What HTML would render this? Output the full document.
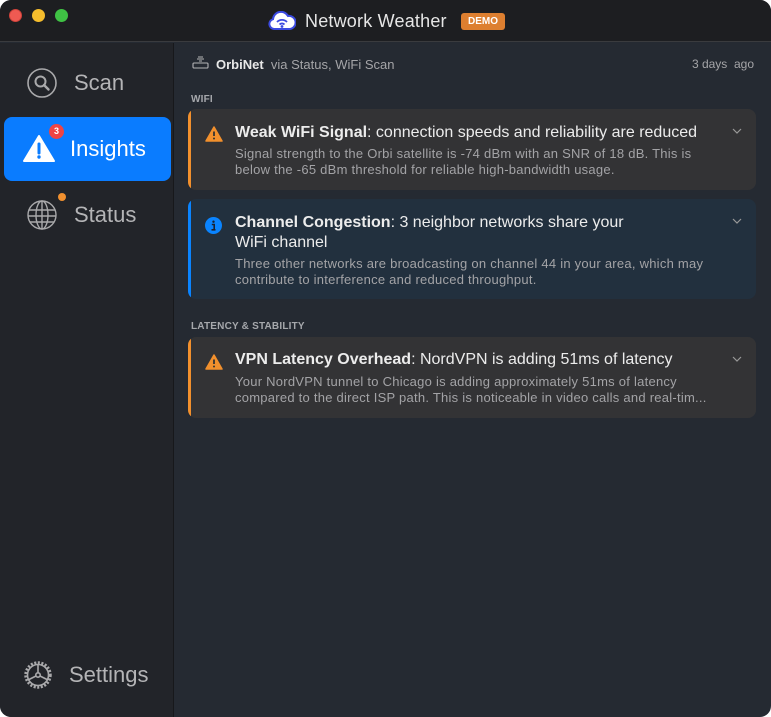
<!DOCTYPE html>
<html><head><meta charset="utf-8"><style>
*{margin:0;padding:0;box-sizing:border-box}
body{width:771px;height:717px;background:#fff;font-family:"Liberation Sans",sans-serif;overflow:hidden;position:relative}
.win{position:absolute;inset:0;border-radius:11px;overflow:hidden;background:#252a32}
.tb{position:absolute;left:0;top:0;width:771px;height:42px;background:#1d1e21;border-bottom:1px solid #3a3b3e}
.dot{position:absolute;top:9px;width:13px;height:13px;border-radius:50%}
.side{position:absolute;left:0;top:43px;width:174px;bottom:0;background:#222429;border-right:1px solid #17181b}
.item{position:absolute;left:4px;width:167px;height:64px;border-radius:8px;color:#b4b4b6;font-size:22px}
.item span{position:absolute;left:70px;top:19px}
.item svg{position:absolute}
.main{position:absolute;left:175px;top:43px;right:0;bottom:0}
.card{position:absolute;left:13px;width:568px;border-radius:8px;overflow:hidden}
.card .bar{position:absolute;left:0;top:0;bottom:0;width:3px}
.card h3{position:absolute;left:47px;font-size:16px;font-weight:bold;color:#ececec;line-height:20px;white-space:nowrap}
.card h3 i{font-style:normal;font-weight:normal;}
.card p{position:absolute;left:47px;font-size:13px;color:#a3a3a6;line-height:15.5px;white-space:nowrap;letter-spacing:.25px}
.card svg{position:absolute}
.chev{position:absolute;right:14px}
.sec{position:absolute;left:16px;font-size:10px;font-weight:bold;color:#a6a8ac;letter-spacing:.2px}
</style></head><body><div class="win">
<div class="tb">
<div class="dot" style="left:9px;background:#ee5a52;border:1px solid #d0433b"></div>
<div class="dot" style="left:32px;background:#f5bd2d"></div>
<div class="dot" style="left:55px;background:#3fc244"></div>
<svg style="position:absolute;left:268px;top:11px" width="28" height="20" viewBox="0 0 28 20"><path d="M6 18a5 5 0 0 1-1-9.8A8 8 0 0 1 20 5a6 6 0 0 1 2 13z" fill="#fff" stroke="#3b4ae0" stroke-width="2"/><path d="M9 11a7 7 0 0 1 10 0M11.5 13.5a3.5 3.5 0 0 1 5 0" stroke="#3b4ae0" stroke-width="1.8" fill="none"/><circle cx="14" cy="15.5" r="1.4" fill="#3b4ae0"/></svg>
<div style="position:absolute;left:305px;top:11px;font-size:18px;color:#e6e6e6;letter-spacing:.2px">Network Weather</div>
<div style="position:absolute;left:461px;top:13px;width:44px;height:17px;border-radius:3px;background:#dd7f30;color:#fff;font-size:10px;font-weight:bold;text-align:center;line-height:17px">DEMO</div>
</div>
<div class="side">
<div class="item" style="top:8px"><svg style="left:22px;top:16px" width="32" height="32" viewBox="0 0 32 32"><circle cx="16" cy="16" r="14" fill="none" stroke="#a9a9ab" stroke-width="1.6"/><circle cx="14.5" cy="14.5" r="5" fill="none" stroke="#a9a9ab" stroke-width="2"/><path d="M18 18l4.5 4.5" stroke="#a9a9ab" stroke-width="2.4" stroke-linecap="round"/></svg><span>Scan</span></div>
<div class="item" style="top:74px;background:#0a7cff;color:#fff"><svg style="left:18px;top:16px" width="34" height="30" viewBox="0 0 34 30"><path d="M17 3L32 28H2z" fill="#fff" stroke="#fff" stroke-width="2" stroke-linejoin="round"/><path d="M17 11v9" stroke="#0a7cff" stroke-width="3" stroke-linecap="round"/><circle cx="17" cy="24" r="1.7" fill="#0a7cff"/></svg>
<div style="position:absolute;left:45px;top:7px;width:15px;height:15px;border-radius:50%;background:#ee4444;color:#fff;font-size:9px;font-weight:bold;text-align:center;line-height:15px">3</div><span style="left:66px">Insights</span></div>
<div class="item" style="top:140px"><svg style="left:22px;top:16px" width="32" height="32" viewBox="0 0 32 32" fill="none" stroke="#a9a9ab" stroke-width="1.4"><circle cx="16" cy="16" r="14"/><ellipse cx="16" cy="16" rx="6" ry="14"/><path d="M3 11h26M2 17h28M4 23h24M16 2v28"/></svg><div style="position:absolute;left:54px;top:10px;width:8px;height:8px;border-radius:50%;background:#f0902f"></div><span>Status</span></div>
<div class="item" style="top:600px"><svg style="left:18px;top:16px" width="32" height="32" viewBox="0 0 32 32" fill="none" stroke="#a9a9ab" stroke-width="1.6"><circle cx="16" cy="16" r="12" stroke-dasharray="2 1.5" stroke-width="3.5"/><circle cx="16" cy="16" r="10.5"/><circle cx="16" cy="16" r="2.2"/><path d="M16 14V5.5M14 17l-8 4M18 17l8 4"/></svg><span style="left:65px">Settings</span></div>
</div>
<div class="main">
<svg style="position:absolute;left:17px;top:13px" width="17" height="13" viewBox="0 0 17 13" fill="none" stroke="#b5b5b7" stroke-width="1.1"><rect x="1" y="7" width="15" height="5" rx="1"/><path d="M6 1h5M5 3h7M7 5h3"/></svg>
<div style="position:absolute;left:41px;top:14px;font-size:13px;color:#e8e8e8"><b>OrbiNet</b> <span style="color:#a5a5a8">&nbsp;via Status, WiFi Scan</span></div>
<div style="position:absolute;right:17px;top:14px;font-size:12px;color:#a5a5a8">3 days &nbsp;ago</div>
<div class="sec" style="top:51px">WIFI</div>
<div class="card" style="top:66px;height:81px;background:#333335"><div class="bar" style="background:#f2902d"></div>
<svg style="left:17px;top:17px" width="18" height="16" viewBox="0 0 18 16"><path d="M9 1L17 15H1z" fill="#f2902d" stroke="#f2902d" stroke-width="1.5" stroke-linejoin="round"/><path d="M9 5.5v4.5" stroke="#333" stroke-width="1.8"/><circle cx="9" cy="12.5" r="1" fill="#333"/></svg>
<h3 style="top:14px">Weak WiFi Signal<i>: connection speeds and reliability are reduced</i></h3>
<p style="top:37px">Signal strength to the Orbi satellite is -74 dBm with an SNR of 18 dB. This is<br>below the -65 dBm threshold for reliable high-bandwidth usage.</p>
<svg class="chev" style="top:19px" width="10" height="6" viewBox="0 0 10 6"><path d="M1 1l4 4 4-4" stroke="#999" stroke-width="1.2" fill="none"/></svg></div>
<div class="card" style="top:156px;height:100px;background:#22303e"><div class="bar" style="background:#0a84ff"></div>
<svg style="left:17px;top:18px" width="17" height="17" viewBox="0 0 17 17"><circle cx="8.5" cy="8.5" r="8.5" fill="#0a84ff"/><circle cx="8.5" cy="4.7" r="1.2" fill="#1a2230"/><path d="M6.8 7.5h2.4v5M6.5 12.8h4" stroke="#1a2230" stroke-width="1.6" fill="none"/></svg>
<h3 style="top:14px">Channel Congestion<i>: 3 neighbor networks share your<br>WiFi channel</i></h3>
<p style="top:57px">Three other networks are broadcasting on channel 44 in your area, which may<br>contribute to interference and reduced throughput.</p>
<svg class="chev" style="top:19px" width="10" height="6" viewBox="0 0 10 6"><path d="M1 1l4 4 4-4" stroke="#999" stroke-width="1.2" fill="none"/></svg></div>
<div class="sec" style="top:278px">LATENCY &amp; STABILITY</div>
<div class="card" style="top:294px;height:81px;background:#333335"><div class="bar" style="background:#f2902d"></div>
<svg style="left:17px;top:17px" width="18" height="16" viewBox="0 0 18 16"><path d="M9 1L17 15H1z" fill="#f2902d" stroke="#f2902d" stroke-width="1.5" stroke-linejoin="round"/><path d="M9 5.5v4.5" stroke="#333" stroke-width="1.8"/><circle cx="9" cy="12.5" r="1" fill="#333"/></svg>
<h3 style="top:13px">VPN Latency Overhead<i>: NordVPN is adding 51ms of latency</i></h3>
<p style="top:37px">Your NordVPN tunnel to Chicago is adding approximately 51ms of latency<br>compared to the direct ISP path. This is noticeable in video calls and real-tim...</p>
<svg class="chev" style="top:19px" width="10" height="6" viewBox="0 0 10 6"><path d="M1 1l4 4 4-4" stroke="#999" stroke-width="1.2" fill="none"/></svg></div>
</div>
</div></body></html>
